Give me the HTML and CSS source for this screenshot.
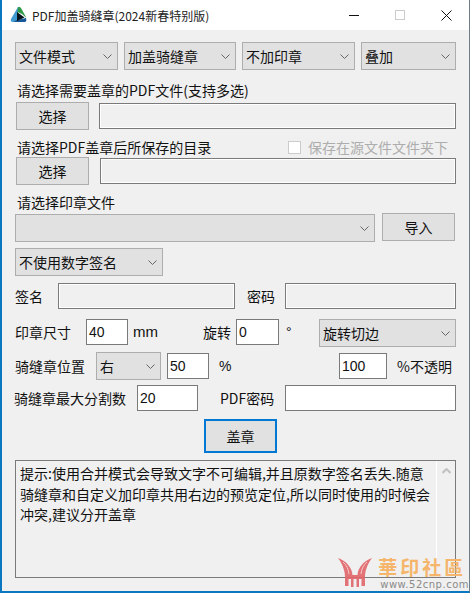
FILE: index.html
```html
<!DOCTYPE html>
<html lang="zh-CN">

<head>
    <meta charset="UTF-8">
    <title>PDF加盖骑缝章(2024新春特别版)</title>
    <link rel="stylesheet" href="styles.css">
</head>

<body>
    <div class="window">
        <div class="titlebar">
            <svg class="app-icon" width="17" height="16" viewBox="0 0 17 16">
                <path d="M8 0 L1 12 Q0 15 3 15 L7 14 L8 6 Z" fill="#3f9ad0" />
                <path d="M3 15 L15 15 Q17 14 16 11 L7 13 Z" fill="#16589a" />
                <path d="M8 0 Q10 -0.5 11 1 L16.500 11 L12 7 L7.500 5 Z" fill="#2f9a48" />
                <path d="M7 5 L14.500 10.500 L7 14 Z" fill="#06121c" />
            </svg>
            <span class="title-text">PDF加盖骑缝章(2024新春特别版)</span>
            <div class="win-btns">
                <span class="win-btn"><i class="min-icon"></i></span>
                <span class="win-btn"><i class="max-icon"></i></span>
                <span class="win-btn">
                    <svg width="11" height="11" viewBox="0 0 11 11">
                        <path d="M0.5 0.5 L10.5 10.5 M10.5 0.5 L0.5 10.5" stroke="#111" stroke-width="1" />
                    </svg>
                </span>
            </div>
        </div>

        <div class="content">
            <div class="row row-modes">
                <div class="select w-mode">文件模式<svg class="chev" width="9" height="5" viewBox="0 0 9 5"><path d="M0.5 0.5 L4.5 4.500 L8.5 0.5" /></svg></div>
                <div class="select w-seam">加盖骑缝章<svg class="chev" width="9" height="5" viewBox="0 0 9 5"><path d="M0.5 0.5 L4.5 4.500 L8.5 0.5" /></svg></div>
                <div class="select w-stamp">不加印章<svg class="chev" width="9" height="5" viewBox="0 0 9 5"><path d="M0.5 0.5 L4.5 4.500 L8.5 0.5" /></svg></div>
                <div class="select w-over">叠加<svg class="chev" width="9" height="5" viewBox="0 0 9 5"><path d="M0.5 0.5 L4.5 4.500 L8.5 0.5" /></svg></div>
            </div>

            <div class="label label-first">请选择需要盖章的PDF文件(支持多选)</div>
            <div class="row">
                <div class="button w-pick">选择</div>
                <div class="input disabled grow w-path1"></div>
            </div>

            <div class="row row-label">
                <div class="label">请选择PDF盖章后所保存的目录</div>
                <div class="check"><i class="check-box"></i>保存在源文件文件夹下</div>
            </div>
            <div class="row">
                <div class="button w-pick">选择</div>
                <div class="input disabled grow w-path2"></div>
            </div>

            <div class="label label-stamp">请选择印章文件</div>
            <div class="row row-file">
                <div class="select w-file"><svg class="chev" width="9" height="5" viewBox="0 0 9 5"><path d="M0.5 0.5 L4.5 4.500 L8.5 0.5" /></svg></div>
                <div class="button w-import">导入</div>
            </div>

            <div class="select w-sign">不使用数字签名<svg class="chev" width="9" height="5" viewBox="0 0 9 5"><path d="M0.5 0.5 L4.5 4.500 L8.5 0.5" /></svg></div>

            <div class="row row-sign">
                <span class="field-label w-sign-label">签名</span>
                <div class="input disabled w-sign-input"></div>
                <span class="field-label w-pwd-label">密码</span>
                <div class="input disabled grow"></div>
            </div>

            <div class="row row-size">
                <span class="field-label w-size-label">印章尺寸</span>
                <div class="input w-40">40</div>
                <span class="field-label w-mm">mm</span>
                <span class="field-label w-rot">旋转</span>
                <div class="input w-0">0</div>
                <span class="field-label w-deg">°</span>
                <div class="select w-cut">旋转切边<svg class="chev" width="9" height="5" viewBox="0 0 9 5"><path d="M0.5 0.5 L4.5 4.500 L8.5 0.5" /></svg></div>
            </div>

            <div class="row row-pos">
                <span class="field-label w-pos-label">骑缝章位置</span>
                <div class="select w-right">右<svg class="chev" width="9" height="5" viewBox="0 0 9 5"><path d="M0.5 0.5 L4.5 4.500 L8.5 0.5" /></svg></div>
                <div class="input w-50">50</div>
                <span class="field-label w-pct">%</span>
                <div class="input w-100">100</div>
                <span class="field-label w-opa">%不透明</span>
            </div>

            <div class="row row-max">
                <span class="field-label w-max-label">骑缝章最大分割数</span>
                <div class="input w-20">20</div>
                <span class="field-label w-pdfpwd">PDF密码</span>
                <div class="input grow"></div>
            </div>

            <div class="stamp-row">
                <div class="button primary">盖章</div>
            </div>

            <div class="memo">
                <div class="memo-text">提示:使用合并模式会导致文字不可编辑,并且原数字签名丢失.随意<br>骑缝章和自定义加印章共用右边的预览定位,所以同时使用的时候会<br>冲突,建议分开盖章</div>
                <div class="memo-scroll">
                    <svg width="9" height="6" viewBox="0 0 9 6"><path d="M0.5 5 L4.5 1 L8.5 5" /></svg>
                </div>
            </div>
        </div>

        <div class="watermark">
            <svg class="mark-logo" width="36" height="31" viewBox="0 0 36 31">
                <path d="M1 1 C9 4 15 10 15.500 18 L20.500 18 C21 10 27 4 35 1 C30 8 28 14 28 20 L28 29 L24.500 29 L24.500 22 L22 22 L22 30 L19.500 30 L19.500 22 L16.500 22 L16.500 30 L14 30 L14 22 L11.500 22 L11.500 29 L8 29 L8 20 C8 14 6 8 1 1 Z" />
                <path class="shine" d="M6 5 C9.500 8 11.500 12 12 17 M30 5 C26.500 8 24.500 12 24 17" />
            </svg>
            <div class="mark-text">
                <div class="mark-name">華印社區</div>
                <div class="mark-url">www.52cnp.com</div>
            </div>
        </div>
    </div>
</body>

</html>
```

FILE: styles.css
```css
html, body {
    margin: 0;
    padding: 0;
}

body {
    width: 470px;
    height: 593px;
    overflow: hidden;
    background: #f0f0f0;
    font-family: "Noto Sans CJK SC", "Liberation Sans", sans-serif;
    font-size: 14px;
    color: #111;
}

.window {
    position: relative;
    box-sizing: border-box;
    width: 470px;
    height: 593px;
    border-left: 2px solid #0a78c0;
    border-bottom: 2px solid #0a78c0;
    border-right: 1px solid #6f7f88;
    background: #f0f0f0;
}

.titlebar {
    display: flex;
    align-items: center;
    height: 30px;
    background: #fff;
    padding-left: 8px;
}

.app-icon {
    margin-right: 5px;
}

.title-text {
    font-size: 12px;
    color: #222;
}

.win-btns {
    display: flex;
    margin-left: auto;
}

.win-btn {
    display: flex;
    align-items: center;
    justify-content: center;
    width: 46px;
    height: 30px;
}

.min-icon {
    display: block;
    width: 10px;
    height: 1px;
    background: #111;
}

.max-icon {
    display: block;
    box-sizing: border-box;
    width: 10px;
    height: 10px;
    border: 1px solid #ccc;
}

.content {
    padding: 12px 13px 0 13px;
}

.row {
    display: flex;
    align-items: center;
}

.row-modes {
    gap: 6px;
}

.select {
    box-sizing: border-box;
    display: flex;
    align-items: center;
    flex: none;
    height: 28px;
    padding-left: 3px;
    background: #e1e1e1;
    border: 1px solid #adadad;
    line-height: 26px;
}

.chev {
    margin-left: auto;
    margin-right: 5px;
    fill: none;
    stroke: #666;
    stroke-width: 1;
}

.w-mode { width: 103px; }
.w-seam { width: 112px; }
.w-stamp { width: 113px; }
.w-over { width: 95px; }
.w-file { width: 360px; margin-top: 1px; }
.w-sign { width: 148px; margin-top: 6px; }
.w-cut { width: 137px; }
.w-right { width: 65px; }

.label {
    padding-left: 2px;
    line-height: 20px;
    height: 20px;
}

.label-first {
    margin-top: 10px;
    margin-bottom: 2px;
}

.button {
    box-sizing: border-box;
    display: flex;
    align-items: center;
    justify-content: center;
    flex: none;
    background: #e1e1e1;
    border: 1px solid #adadad;
    height: 28px;
}

.w-pick {
    width: 73px;
    margin-left: 1px;
}

.w-import {
    width: 73px;
    margin-left: 7px;
}

.input {
    box-sizing: border-box;
    flex: none;
    height: 26px;
    padding-left: 2px;
    background: #fff;
    border: 1px solid #7a7a7a;
    line-height: 24px;
    font-family: "Liberation Sans", sans-serif;
}

.input.disabled {
    background: #f0f0f0;
    outline: 1px solid #fff;
    outline-offset: -2px;
}

.grow {
    flex: 1;
    min-width: 0;
}

.w-path1 { margin-left: 10px; }
.w-path2 { margin-left: 11px; }

.row-label {
    justify-content: space-between;
    margin-top: 7px;
    height: 20px;
}

.check {
    display: flex;
    align-items: center;
    gap: 7px;
    padding-right: 8px;
    color: #adadad;
}

.check-box {
    display: block;
    box-sizing: border-box;
    width: 13px;
    height: 13px;
    background: #fff;
    border: 1px solid #ccc;
}

.label-stamp {
    margin-top: 7px;
    margin-bottom: 1px;
}

.row-file {
    align-items: flex-start;
}

.field-label {
    flex: none;
}

.row-sign {
    margin-top: 7px;
}

.w-sign-label { width: 43px; }
.w-sign-input { width: 177px; }
.w-pwd-label { width: 38px; margin-left: 12px; }

.row-size {
    align-items: flex-start;
    margin-top: 10px;
    line-height: 26px;
}

.w-size-label { width: 71px; }
.w-40 { width: 42px; }
.w-mm { width: 70px; margin-left: 5px; font-family: "Liberation Sans", sans-serif; font-size: 15px; }
.w-rot { width: 33px; }
.w-0 { width: 43px; }
.w-deg { width: 33px; margin-left: 7px; font-family: "Liberation Sans", sans-serif; }

.row-pos {
    margin-top: 5px;
}

.w-pos-label { width: 81px; }
.w-50 { width: 42px; margin-left: 6px; }
.w-pct { width: 120px; margin-left: 10px; font-family: "Liberation Sans", sans-serif; }
.w-100 { width: 48px; }
.w-opa { margin-left: 10px; }

.row-max {
    margin-top: 5px;
    margin-left: -1px;
}

.w-max-label { width: 123px; }
.w-20 { width: 61px; }
.w-pdfpwd { width: 65px; margin-left: 22px; }

.stamp-row {
    display: flex;
    margin-top: 8px;
    padding-left: 189px;
}

.button.primary {
    width: 73px;
    height: 34px;
    border: 2px solid #0078d4;
}

.memo {
    box-sizing: border-box;
    display: flex;
    height: 118px;
    margin-top: 7px;
    border: 1px solid #7a7a7a;
}

.memo-text {
    flex: 1;
    padding: 2px 4px;
    line-height: 20.7px;
    white-space: nowrap;
}

.memo-scroll {
    flex: none;
    display: flex;
    justify-content: center;
    width: 18px;
    padding-top: 7px;
    border-left: 1px solid #fff;
}

.memo-scroll svg {
    fill: none;
    stroke: #c0c0c0;
    stroke-width: 2;
}

/* site stamp over the corner of the window */
.watermark {
    position: absolute;
    right: 0;
    bottom: 0;
    display: flex;
    align-items: flex-end;
    gap: 5px;
}

.mark-logo {
    margin-bottom: 3px;
    fill: #e2656a;
    opacity: 0.9;
}

.mark-logo .shine {
    fill: none;
    stroke: #f6c6c4;
    stroke-width: 1;
}

.mark-name {
    height: 22px;
    font-family: "Noto Sans CJK TC", sans-serif;
    font-size: 19px;
    line-height: 22px;
    font-weight: 700;
    color: #f5b56a;
    letter-spacing: 3px;
    white-space: nowrap;
}

.mark-url {
    height: 12px;
    margin-top: 1px;
    padding-left: 2px;
    font-family: "DejaVu Sans", sans-serif;
    font-size: 10px;
    line-height: 12px;
    color: #8a8a8a;
    letter-spacing: 0.500px;
    white-space: nowrap;
}
```
